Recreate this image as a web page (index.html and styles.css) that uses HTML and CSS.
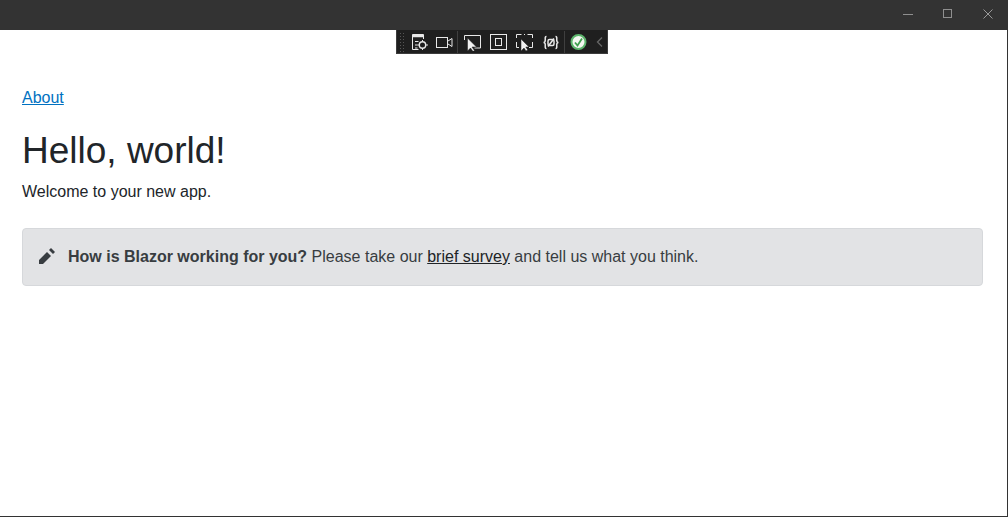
FILE: index.html
```html
<!DOCTYPE html>
<html lang="en">
<head>
<meta charset="utf-8">
<title>Blazor</title>
<link rel="stylesheet" href="styles.css">
</head>
<body>
<div class="window">
  <header class="titlebar">
    <button class="win-btn" aria-label="Minimize"><svg width="10" height="10" viewBox="0 0 10 10"><path d="M0 5.500h10" stroke="#8f8f8f" fill="none"/></svg></button>
    <button class="win-btn" aria-label="Maximize"><svg width="10" height="10" viewBox="0 0 10 10"><rect x=".5" y=".5" width="8" height="8" stroke="#8f8f8f" fill="none"/></svg></button>
    <button class="win-btn" aria-label="Close"><svg width="10" height="10" viewBox="0 0 10 10"><path d="M.5.5l9 9M9.500.5l-9 9" stroke="#9a9a9a" fill="none"/></svg></button>
  </header>
  <div class="devbar">
    <span class="grip"></span>
    <svg class="ico gap-7" width="17" height="18" viewBox="0 0 17 18" fill="none" stroke="#e8e8e8"><path d="M6.500 16.500H.5V1.500h11V6"/><path d="M.5 3h11" stroke-width="2.500"/><path d="M3 8.500h3.500M3 12h2.500M3 15h2.500"/><circle cx="10.500" cy="12" r="3.200" stroke-width="1.400"/><path d="M10.500 7v2M10.500 15v2M5.500 12h2M13.500 12h2.500"/></svg>
    <svg class="ico gap-4" width="17" height="18" viewBox="0 0 17 18" fill="none" stroke="#e8e8e8"><rect x=".5" y="4.500" width="11" height="10"/><path d="M12 8l4-2.500v8L12 11"/></svg>
    <span class="sep"></span>
    <svg class="ico gap-9" width="17" height="18" viewBox="0 0 17 18" fill="none" stroke="#e8e8e8"><path d="M.5 7V2.500h16v12.500h-6"/><path d="M3.500 5v13l3-3 2.500 3.500 1.500-1-2.500-3.500H12.500z" fill="#f2f2f2" stroke="#1f1f1f" stroke-width=".5"/></svg>
    <svg class="ico gap-9" width="17" height="18" viewBox="0 0 17 18" fill="none" stroke="#e8e8e8"><rect x=".5" y="1.500" width="16" height="15"/><rect x="5.500" y="5.500" width="6" height="7"/></svg>
    <svg class="ico gap-10" width="17" height="18" viewBox="0 0 17 18" fill="none" stroke="#e8e8e8"><path d="M.5 5V1.500h5M8 1.500h1M11.500 1.500h5V5M.5 9v5.500h2.500M16.500 9v5.500H13"/><path d="M5 6v12l3-3 2 3 1.800-1-2-3H13z" fill="#f2f2f2" stroke="#1f1f1f" stroke-width=".5"/></svg>
    <svg class="ico gap-5" width="16" height="18" viewBox="0 0 16 18" fill="none" stroke="#e8e8e8" stroke-width="1.500"><path d="M3.500 3.500C1.500 3.500 2.500 6 2.200 8 2 9 1.500 9.500.5 9.500c1 0 1.500.5 1.700 1.500.3 2-.7 4.500 1.300 4.500M12.500 3.500c2 0 1 2.500 1.300 4.500.2 1 .7 1.500 1.700 1.500-1 0-1.500.5-1.700 1.500-.3 2 .7 4.500-1.300 4.500"/><rect x="5" y="6.500" width="6" height="6" rx="1.500"/><path d="M5 13.500l6-8" stroke-width="1.500"/></svg>
    <span class="sep"></span>
    <svg class="ico gap-9" width="17" height="18" viewBox="0 0 17 18"><circle cx="8.500" cy="9" r="7" fill="#f4f8f2" stroke="#5cb56c" stroke-width="2"/><path d="M5 9.500l2.500 3 4.500-7" fill="none" stroke="#3f9f4f" stroke-width="1.800"/></svg>
    <svg class="ico-back" width="7" height="12" viewBox="0 0 7 12" fill="none" stroke="#666" stroke-width="1.300"><path d="M6 1.500L1.500 6 6 10.500"/></svg>
  </div>
  <main class="page">
    <nav class="topnav"><a href="#" class="link">About</a></nav>
    <h1 class="heading">Hello, world!</h1>
    <p class="lead">Welcome to your new app.</p>
    <div class="alert">
      <svg class="pencil" width="16" height="16" viewBox="0 0 8 8"><path fill="#383d41" d="M6 0L5 1l2 2 1-1zM4 2L0 6v2h2l4-4z"/></svg>
      <span class="alert-text"><strong>How is Blazor working for you?</strong> Please take our <a href="#" class="alert-link">brief survey</a> and tell us what you think.</span>
    </div>
  </main>
</div>
</body>
</html>
```
FILE: styles.css
```css
* { box-sizing: border-box; }
html, body { margin: 0; height: 100%; }
body { font-family: "Liberation Sans", Arial, sans-serif; font-size: 16px; line-height: 1.5; color: #212529; background: #fff; overflow: hidden; }
.window { position: relative; height: 517px; border-right: 1px solid #333; border-bottom: 1px solid #333; }
.titlebar { height: 30px; margin-right: -1px; background: #333; display: flex; justify-content: flex-end; }
.win-btn { width: 40px; height: 27px; padding: 0; border: 0; background: none; display: flex; align-items: center; justify-content: center; }
.devbar { position: absolute; left: 396px; top: 30px; width: 212px; height: 24px; background: #1f1f1f; border: 1px solid #3c3c3c; border-top: 0; display: flex; align-items: center; }
.grip { width: 6px; height: 20px; margin: 0 7px 0 2px; flex: none; background: radial-gradient(circle, #555 0.7px, transparent 1px) 0 0 / 3px 3px; }
.ico { flex: none; }
.gap-4 { margin-right: 4px; }
.gap-5 { margin-right: 5px; }
.gap-7 { margin-right: 7px; }
.gap-9 { margin-right: 9px; }
.gap-10 { margin-right: 10px; }
.ico-back { flex: none; }
.sep { width: 1px; height: 22px; background: #3f3f3f; margin-right: 6px; flex: none; }
.gap-5 + .sep { margin-right: 5px; }
.page { padding: 55px 24px 0 22px; }
.topnav { height: 26px; line-height: 26px; }
.link { color: #0071c1; text-decoration: underline; }
.heading { margin: 16px 0 6px; font-size: 37px; font-weight: 400; line-height: 48px; }
.lead { margin: 0 0 25px; line-height: 22px; }
.alert { height: 58px; padding: 0 16px; display: flex; align-items: center; background: #e2e3e5; border: 1px solid #d6d8db; border-radius: 4px; color: #383d41; }
.pencil { flex: none; margin-right: 13px; margin-top: -2px; }
.alert-link { color: #202326; text-decoration: underline; }
```
